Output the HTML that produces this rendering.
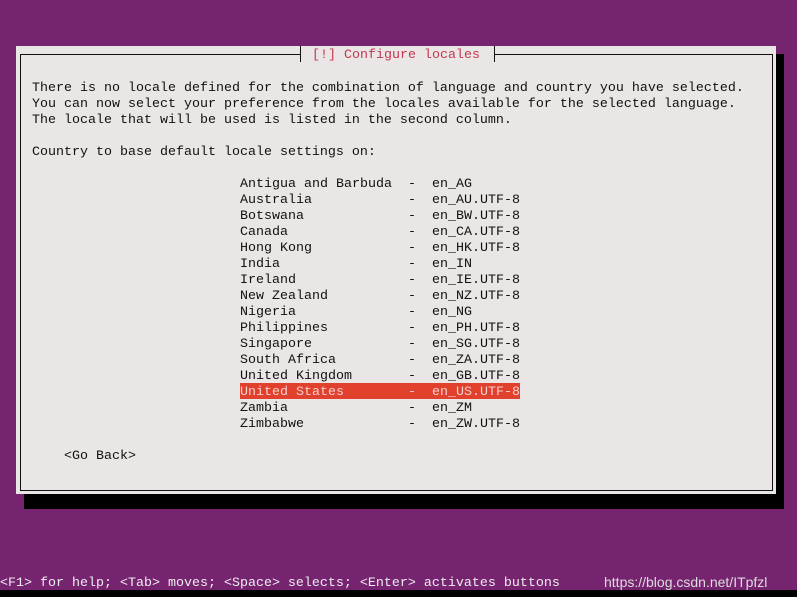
<!DOCTYPE html>
<html><head><meta charset="utf-8"><style>
body{margin:0;width:797px;height:597px;background:#762370;position:relative;overflow:hidden;font-family:"Liberation Mono",monospace;font-size:13.33px;}
.a{position:absolute;white-space:pre;line-height:16px;height:16px;}
.t{color:#111;}
</style></head><body>
<div style="position:absolute;left:24px;top:54px;width:760px;height:455px;background:#000"></div>
<div style="position:absolute;left:16px;top:46px;width:760px;height:448px;background:#e9e6e5"></div>
<div style="position:absolute;left:20px;top:54px;width:751px;height:435px;border:1.5px solid #111"></div>
<div style="position:absolute;left:300px;top:46px;width:193px;height:16px;background:#e9e6e5;border-left:1.5px solid #111;border-right:1.5px solid #111"></div>
<div class="a" style="left:304px;top:48px;color:#c5384f"> [!] Configure locales</div>
<div class="a t" style="left:32px;top:81px">There is no locale defined for the combination of language and country you have selected.
You can now select your preference from the locales available for the selected language.
The locale that will be used is listed in the second column.

Country to base default locale settings on:</div>
<div style="position:absolute;left:240px;top:383px;width:280px;height:16px;background:#e0402c"></div>
<div class="a t" style="left:240px;top:177px">Antigua and Barbuda  -  en_AG
Australia            -  en_AU.UTF-8
Botswana             -  en_BW.UTF-8
Canada               -  en_CA.UTF-8
Hong Kong            -  en_HK.UTF-8
India                -  en_IN
Ireland              -  en_IE.UTF-8
New Zealand          -  en_NZ.UTF-8
Nigeria              -  en_NG
Philippines          -  en_PH.UTF-8
Singapore            -  en_SG.UTF-8
South Africa         -  en_ZA.UTF-8
United Kingdom       -  en_GB.UTF-8
<span style="color:#f6d0cc">United States        -  en_US.UTF-8</span>
Zambia               -  en_ZM
Zimbabwe             -  en_ZW.UTF-8</div>
<div class="a t" style="left:64px;top:449px">&lt;Go Back&gt;</div>
<div style="position:absolute;left:0;top:590px;width:797px;height:7px;background:#000"></div>
<div class="a" style="left:0;top:576px;color:#eee">&lt;F1&gt; for help; &lt;Tab&gt; moves; &lt;Space&gt; selects; &lt;Enter&gt; activates buttons</div>
<div class="a" style="left:604px;top:574px;color:#ddd;font-family:'Liberation Sans',sans-serif;font-size:14px">https://blog.csdn.net/ITpfzl</div>
</body></html>
